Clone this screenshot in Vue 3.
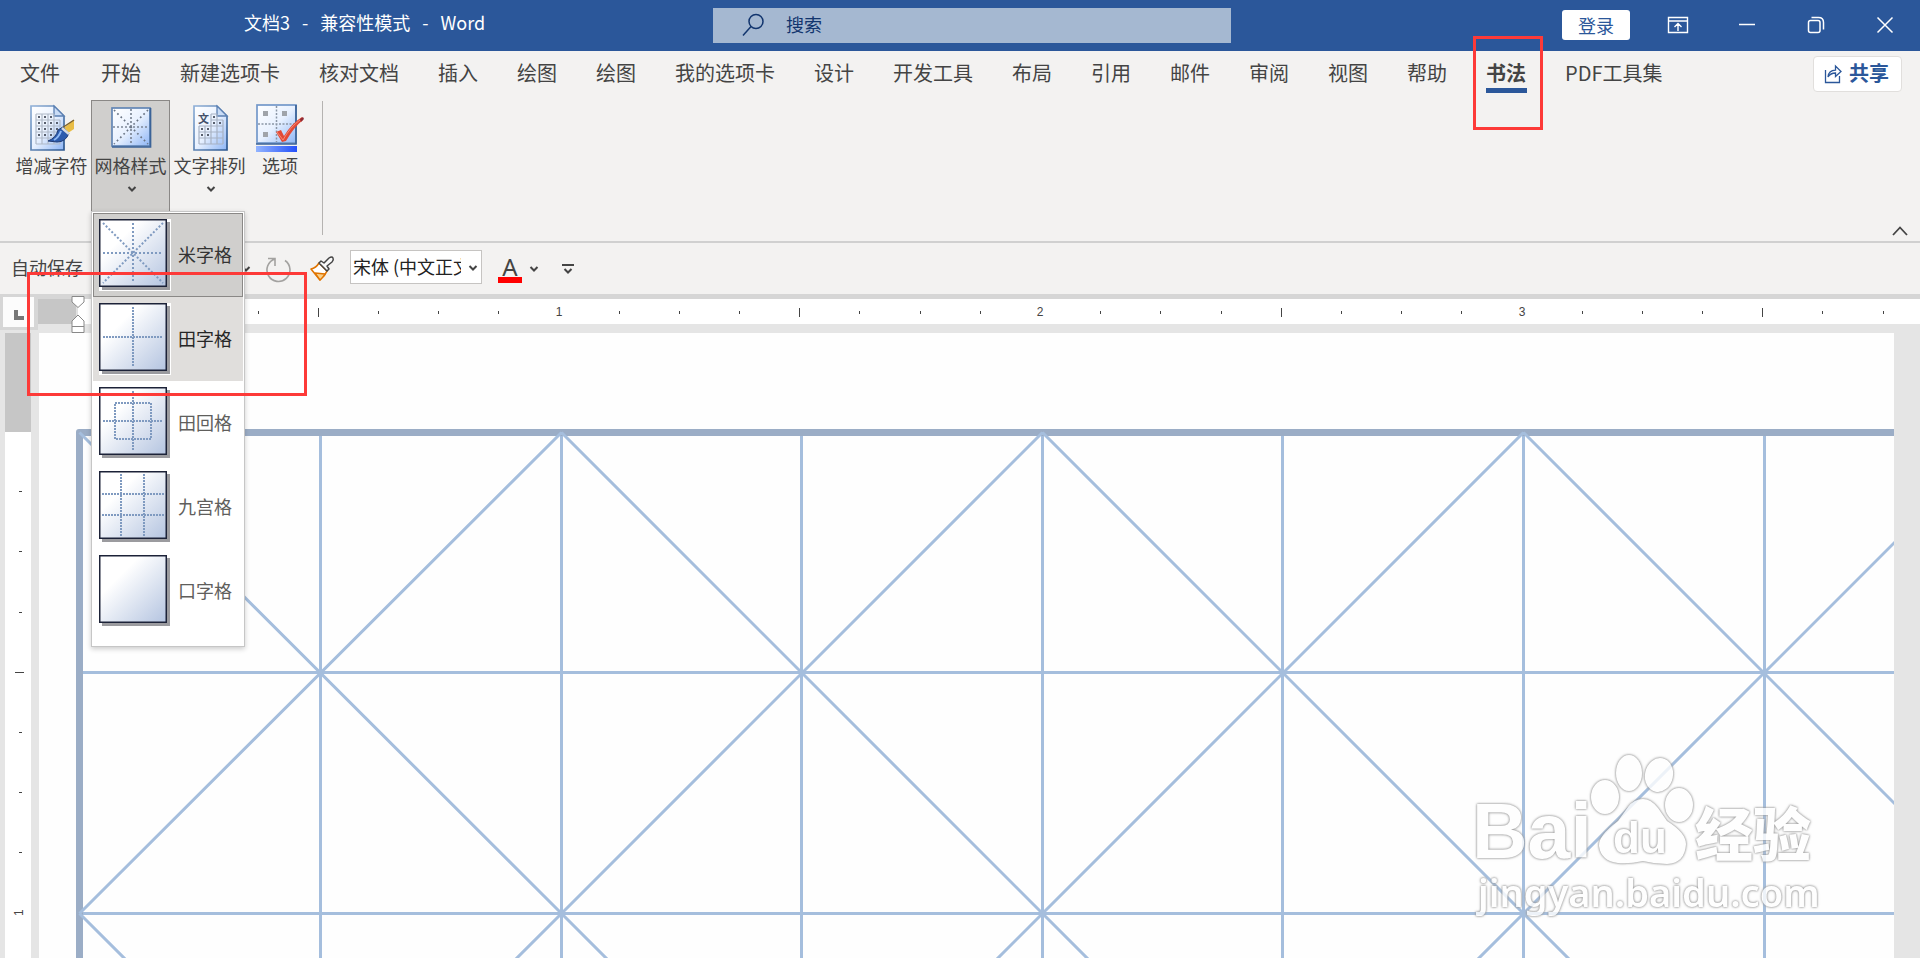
<script setup>
import { computed, onBeforeUnmount, onMounted, ref } from 'vue'

const tabs = ['文件', '开始', '新建选项卡', '核对文档', '插入', '绘图', '绘图', '我的选项卡', '设计', '开发工具', '布局', '引用', '邮件', '审阅', '视图', '帮助', '书法', 'PDF工具集']
const activeTab = ref(16)

const styles = [
  { name: '米字格', lines: 'M34 4V64M4 34H64M4 4L64 64M64 4L4 64' },
  { name: '田字格', lines: 'M34 4V64M4 34H64' },
  { name: '田回格', lines: 'M34 4V64M4 34H64M16 16H52V52H16Z' },
  { name: '九宫格', lines: 'M22 3V65M45 3V65M3 23H65M3 44H65' },
  { name: '口字格', lines: '' }
]
const selectedStyle = ref(0)
const hoveredStyle = ref(1)

const INCH = 481.5
const winW = ref(window.innerWidth)
const winH = ref(window.innerHeight)
function onResize() {
  winW.value = window.innerWidth
  winH.value = window.innerHeight
}
onMounted(() => window.addEventListener('resize', onResize))
onBeforeUnmount(() => window.removeEventListener('resize', onResize))

function buildTicks(origin, length) {
  const count = Math.floor(((length - origin - 10) * 8) / INCH)
  return Array.from({ length: Math.max(count, 0) }, (_, i) => {
    const n = i + 1
    return {
      pos: Math.round(origin + (n * INCH) / 8),
      label: n % 8 === 0 ? n / 8 : null,
      major: n % 8 === 4
    }
  })
}
const ticksX = computed(() => buildTicks(39, winW.value - 38))
const ticksY = computed(() => buildTicks(98, winH.value - 333))

const HALF = 240.6
const COLS = 16
const ROWS = 10
const verticals = Array.from({ length: COLS }, (_, i) => Math.floor(2.8 + i * HALF))
const horizontals = Array.from({ length: ROWS }, (_, i) => Math.floor(2 + i * HALF))
const diagonals = []
for (let r = 0; r + 2 < ROWS; r += 2) {
  for (let c = 0; c + 2 < COLS; c += 2) {
    const x1 = verticals[c] + 1.5
    const x2 = verticals[c + 2] + 1.5
    const y1 = horizontals[r] + 1.5
    const y2 = horizontals[r + 2] + 1.5
    diagonals.push(`M${x1} ${y1}L${x2} ${y2}M${x2} ${y1}L${x1} ${y2}`)
  }
}
</script>

<template>
  <div class="app">
    <header class="title-bar">
      <h1 class="title"><span>文档3</span><span>-</span><span>兼容性模式</span><span>-</span><span>Word</span></h1>
      <label class="search">
        <svg width="24" height="24" viewBox="0 0 24 24" fill="none" stroke="#12356e" stroke-width="1.5"><circle cx="15" cy="8.500" r="7" /><path d="M10 13.500L2 22.500" /></svg>
        <input type="text" placeholder="搜索" aria-label="搜索" />
      </label>
      <div class="window-tools">
        <button class="login">登录</button>
        <button class="win" aria-label="功能区显示选项">
          <svg width="22" height="18" viewBox="0 0 22 18" fill="none" stroke="#fff" stroke-width="1.4"><path d="M1.500 1.500H20.500V16.500H1.500ZM1.500 5H20.500M11 15V8M7.500 11L11 7.600L14.500 11" /></svg>
        </button>
        <button class="win" aria-label="最小化">
          <svg width="18" height="18" viewBox="0 0 18 18" stroke="#fff" stroke-width="1.5"><path d="M1 8.500H17" /></svg>
        </button>
        <button class="win" aria-label="还原">
          <svg width="18" height="18" viewBox="0 0 18 18" fill="none" stroke="#fff" stroke-width="1.5"><rect x="1.500" y="4.500" width="11.500" height="12" rx="2" /><path d="M4.500 1.500H11.500Q16.500 1.500 16.500 6.500V13.500" /></svg>
        </button>
        <button class="win" aria-label="关闭">
          <svg width="18" height="18" viewBox="0 0 18 18" stroke="#fff" stroke-width="1.5"><path d="M1.500 1.500L16.500 16.500M16.500 1.500L1.500 16.500" /></svg>
        </button>
      </div>
    </header>

    <nav class="tabs">
      <button v-for="(t, i) in tabs" :key="i" class="tab" :class="{ active: i === activeTab }" @click="activeTab = i">
        <span>{{ t }}</span>
        <i v-if="i === 16" class="callout callout-tab"></i>
      </button>
      <button class="share">
        <svg width="18" height="20" viewBox="0 0 18 20" fill="none" stroke="#2b579a" stroke-width="1.3"><path d="M1.500 6V18.500H15.500V12M4 13Q4.500 6.500 11.500 6.200V2L17 7.500L11.500 12.500V9Q6.500 9 4 13Z" /></svg>
        <span>共享</span>
      </button>
    </nav>

    <section class="ribbon">
      <div class="group">
        <button class="tool">
          <svg width="48" height="48" viewBox="0 0 48 48">
            <defs>
              <linearGradient id="paper" x1="0" y1="0" x2="1" y2="1"><stop offset="0" stop-color="#fff" /><stop offset=".5" stop-color="#e8f1ff" /><stop offset="1" stop-color="#8db5f5" /></linearGradient>
              <linearGradient id="edge" x1="0" y1="0" x2="1" y2="1"><stop offset="0" stop-color="#8fb0d8" /><stop offset="1" stop-color="#2c578f" /></linearGradient>
            </defs>
            <path d="M3 2H26L36 12V46H3Z" fill="url(#paper)" stroke="url(#edge)" stroke-width="1.700" />
            <path d="M26 2V12H36Z" fill="#c9dcf6" stroke="#5c80b2" stroke-width="1.300" />
            <path d="M8 10H26M8 16H32M8 22H32M8 28H32M8 34H32M8 40H32M8 10V40M14 10V40M20 10V40M26 10V40M32 16V40" stroke="#b0b9c8" stroke-width="1.200" />
            <path d="M10 13H26M10 19H32M10 25H32M10 31H24" stroke="#59606e" stroke-width="2" stroke-dasharray="2 4" />
            <path d="M36 24L46 16V25L40 29Z" fill="#e9bd45" /><path d="M34 24L46 16" stroke="#7d6128" stroke-width="1.500" />
            <path d="M20 37Q28 34 30 26L35 23L41 29Q38 38 29 38Z" fill="#2c5bad" stroke="#203c76" /><path d="M26 36Q31 33 33 27" stroke="#8eb8f5" stroke-width="2" fill="none" />
            <path d="M34 24L41 30" stroke="#d8dbe0" stroke-width="2.500" />
          </svg>
          <span>增减字符</span>
        </button>
        <div class="menu-anchor">
          <button class="tool pressed" aria-haspopup="true">
            <svg width="48" height="48" viewBox="0 0 48 48">
              <rect x="5" y="4" width="38" height="38" fill="url(#paper)" stroke="#6386b5" stroke-width="1.700" />
              <path d="M43.500 4V43H5" fill="none" stroke="#3b6398" stroke-width="1.700" />
              <path d="M24 5V41M6 23H42" stroke="#7c8696" stroke-width="1.700" stroke-dasharray="2 2" fill="none" />
              <path d="M7 6L41 40M41 6L7 40" stroke="#6b7686" stroke-width="1.700" stroke-dasharray="1.700 3" fill="none" />
            </svg>
            <span>网格样式</span>
            <svg class="chev" width="10" height="8" viewBox="0 0 10 8"><path d="M1.500 2L5 5.500L8.500 2" /></svg>
          </button>
          <ul class="menu">
            <li v-for="(s, i) in styles" :key="s.name">
              <button class="item" :class="{ selected: i === selectedStyle, hover: i === hoveredStyle }" @click="selectedStyle = i">
                <svg width="72" height="72" viewBox="0 0 72 72">
                  <defs><linearGradient id="tile" x1="0" y1="0" x2="1" y2="1"><stop offset=".3" stop-color="#fff" /><stop offset="1" stop-color="#b4c4e0" /></linearGradient></defs>
                  <path fill="#fff" d="M0 0H72V72H0Z" />
                  <rect x="3" y="3" width="68" height="68" fill="#9b9b9f" />
                  <rect x=".75" y=".75" width="66.500" height="66.500" fill="url(#tile)" stroke="#1c2238" stroke-width="1.500" />
                  <path :d="s.lines" fill="none" stroke="#7f9ac0" stroke-width="2" :stroke-dasharray="i === 0 ? '2 2' : '2 1'" />
                </svg>
                <span>{{ s.name }}</span>
              </button>
            </li>
          </ul>
        </div>
        <button class="tool" aria-haspopup="true">
          <svg width="48" height="48" viewBox="0 0 48 48">
            <path d="M8 2H31L41 12V46H8Z" fill="url(#paper)" stroke="url(#edge)" stroke-width="1.700" />
            <path d="M31 2V12H41Z" fill="#c9dcf6" stroke="#5c80b2" stroke-width="1.300" />
            <path d="M25 10H31M25 16H37M13 22H37M13 28H37M13 34H37M13 40H37M13 22V40M19 22V40M25 10V40M31 10V40M37 16V40" stroke="#a7b2c4" stroke-width="1.200" />
            <path d="M27 13H31M27 19H36M15 25H24M15 31H24" stroke="#59606e" stroke-width="2" stroke-dasharray="2 4" />
            <text x="12" y="19" font-size="11" font-weight="700" fill="#44516a">文</text>
          </svg>
          <span>文字排列</span>
          <svg class="chev" width="10" height="8" viewBox="0 0 10 8"><path d="M1.500 2L5 5.500L8.500 2" /></svg>
        </button>
        <button class="tool narrow">
          <svg width="48" height="48" viewBox="0 0 48 48">
            <defs><linearGradient id="bar"><stop offset="0" stop-color="#92b4ff" /><stop offset="1" stop-color="#2450fa" /></linearGradient></defs>
            <rect x="1" y="1" width="39" height="38" fill="url(#paper)" stroke="#7398ca" stroke-width="1.700" /><path d="M40 1V40H0" fill="none" stroke="#3b6398" stroke-width="1.700" />
            <path d="M20.500 2V38M2 20H39" stroke="#8a96a6" stroke-width="1.500" stroke-dasharray="2 1.500" />
            <path d="M7 7H12V12H7ZM26 7H31V12H26ZM7 28H12V33H7Z" fill="#a0a4aa" />
            <rect y="42" width="41" height="6" fill="url(#bar)" />
            <path d="M20 28L25 26L28 32Q36 19 46 13L47 16Q38 23 30 37L26 38Z" fill="#e34a35" /><path d="M21 28L27 36Q34 23 44 16" fill="none" stroke="#f58b76" /><path d="M44 15L47 13L48 15L45 18Z" fill="#8f2b34" />
          </svg>
          <span>选项</span>
        </button>
      </div>
      <button class="collapse" aria-label="折叠功能区"><svg width="18" height="12" viewBox="0 0 18 12" fill="none" stroke="#444" stroke-width="1.800"><path d="M2 10L9 2.500L16 10" /></svg></button>
    </section>

    <section class="quick">
      <span class="autosave">自动保存</span>
      <button class="icon-btn undo-more" aria-label="撤消选项"><svg class="chev" width="10" height="8" viewBox="0 0 10 8"><path d="M1.500 2L5 5.500L8.500 2" /></svg></button>
      <button class="icon-btn redo" aria-label="重复"><svg width="26" height="28" viewBox="0 0 26 28" fill="none" stroke="#a3a2a0" stroke-width="1.600"><path d="M2 3.500H9V11M9 4A11.500 11.500 0 1 0 19 5.500" /></svg></button>
      <button class="icon-btn brush" aria-label="格式刷">
        <svg width="26" height="26" viewBox="0 0 26 26" stroke-linejoin="round">
          <path d="M2 13Q7 12 10 7L18 15Q16 20 11 24Z" fill="#fff" stroke="#e07400" stroke-width="1.600" /><path d="M6 17L16 18Q14 21 11 24Z" fill="#f9d18c" stroke="#e07400" stroke-width="1.300" />
          <path d="M10 7L12 5L15 7L20 2Q23 0 24 2Q25 4 23 6L18 10L20 13L18 15Z" fill="#f9f9f9" stroke="#444" stroke-width="1.500" />
        </svg>
      </button>
      <div class="font-box">
        <select aria-label="字体"><option>宋体 (中文正文)</option></select>
        <svg class="chev" width="10" height="8" viewBox="0 0 10 8"><path d="M1.500 2L5 5.500L8.500 2" /></svg>
      </div>
      <button class="icon-btn color" aria-label="字体颜色"><span>A</span><i></i></button>
      <button class="icon-btn color-more" aria-label="更多颜色"><svg class="chev" width="10" height="8" viewBox="0 0 10 8"><path d="M1.500 2L5 5.500L8.500 2" /></svg></button>
      <button class="icon-btn" aria-label="自定义快速访问工具栏"><svg width="12" height="12" viewBox="0 0 12 12" fill="none" stroke="#444" stroke-width="2"><path d="M0 2H12M2.500 6L6 9.500L9.500 6" /></svg></button>
    </section>

    <section class="ruler-row">
      <button class="corner" aria-label="制表符"><svg width="10" height="10" viewBox="0 0 10 10"><path d="M0 0H4V6H10V10H0Z" fill="#777" /></svg></button>
      <svg class="ruler-x" width="100%" height="25">
        <rect width="38" height="25" fill="#c6c6c6" />
        <rect x="38" width="2" height="25" fill="#e1e1e1" />
        <g v-for="t in ticksX" :key="t.pos">
          <text v-if="t.label" :x="t.pos" y="17" text-anchor="middle">{{ t.label }}</text>
          <rect v-else :x="t.pos" :y="t.major ? 9 : 12" width="1" :height="t.major ? 9 : 3" />
        </g>
      </svg>
      <svg class="indent" width="14" height="38" viewBox="0 0 14 38" fill="#fff" stroke="#888" stroke-width="1"><path d="M1 .5H13V6L7 11.500L1 6ZM7 19L13 25V36.500H1V25ZM1 30.500H13" /></svg>
    </section>

    <main class="workspace">
      <svg class="ruler-y" width="26" height="100%">
        <rect width="26" height="99" fill="#c6c6c6" />
        <g v-for="t in ticksY" :key="t.pos">
          <text v-if="t.label" :transform="`translate(18 ${t.pos + 3}) rotate(-90)`">{{ t.label }}</text>
          <rect v-else :x="t.major ? 10 : 14" :y="t.pos" :width="t.major ? 9 : 3" height="1" />
        </g>
      </svg>
      <div class="page">
        <svg class="grid" width="100%" height="100%">
          <path d="M0 7V3Q0 0 3 0H4000V7H7V4000H0Z" fill="#9badc6" />
          <g fill="#a5bedd" shape-rendering="crispEdges">
            <rect v-for="x in verticals.slice(1)" :key="'v' + x" :x="x" y="7" width="3" height="4000" />
            <rect v-for="y in horizontals.slice(1)" :key="'h' + y" x="7" :y="y" width="4000" height="3" />
          </g>
          <path :d="diagonals.join('')" fill="none" stroke="#a5bedd" stroke-width="3" />
        </svg>
        <svg class="watermark" width="350" height="174" viewBox="0 0 350 174">
          <g class="mark">
            <text class="bai" x="-2" y="106">Bai</text>
            <g class="paw">
              <ellipse cx="131" cy="45" rx="14" ry="17" /><ellipse cx="155" cy="21" rx="13" ry="18" /><ellipse cx="185" cy="23" rx="14" ry="17" transform="rotate(12 185 23)" /><ellipse cx="205" cy="53" rx="14" ry="17" />
              <path d="M169 47Q177 47 184 56L193 69Q212 81 212 92Q211 111 193 112Q181 112 169 109Q155 112 144 111Q127 109 125 94Q124 84 144 69L154 55Q160 47 169 47Z" />
            </g>
            <text class="du" x="139" y="101">du</text>
            <text class="exp" x="221" y="104">经验</text>
            <text class="url" x="4" y="155">jingyan.baidu.com</text>
          </g>
        </svg>
      </div>
    </main>
    <i class="callout callout-menu"></i>
  </div>
</template>

<style>
body { background: #e5e5e5; overflow: hidden; }
</style>

<style scoped>
.app { position: relative; display: flex; flex-direction: column; height: 100vh; color: #444; background: #e5e5e5; font-family: "Noto Sans CJK SC", "Noto Sans", sans-serif; font-size: 18px; overflow: hidden; }
button, input, select { font: inherit; color: inherit; }
button { border: 0; padding: 0; background: none; }
svg { display: block; flex: none; }
.chev { fill: none; stroke: #444; stroke-width: 2; }

.title-bar { display: grid; grid-template-columns: 713fr 518fr 689fr; align-items: center; flex: none; height: 51px; background: #2b579a; color: #fff; }
.title { display: flex; gap: 12px; margin: 0 0 7px 244px; font-size: 18px; line-height: 24px; font-weight: 400; white-space: nowrap; }
.search { display: flex; align-items: center; gap: 21px; height: 35px; padding-left: 28px; background: #a5b8d1; color: #12356e; }
.search svg { margin-bottom: 2px; }
.search input { flex: 1; min-width: 0; padding: 0 0 3px; border: 0; outline: 0; background: none; }
.search input::placeholder { color: #12356e; opacity: 1; }
.window-tools { display: flex; justify-content: flex-end; align-items: center; padding: 0 1px 2px 0; }
.login { width: 68px; height: 30px; margin-right: 13px; border-radius: 3px; background: #fff; color: #2b579a; line-height: 28px; }
.win { display: grid; place-items: center; width: 69px; height: 48px; }

.tabs { display: flex; align-items: center; flex: none; height: 49px; padding: 0 18px 0 0; background: #f3f2f1; font-size: 20px; white-space: nowrap; }
.tab { position: relative; height: 46px; padding: 0 19px 5px 20px; line-height: 36px; }
.tab:first-child { padding-right: 21px; }
.tab.active { font-weight: 700; }
.tab.active::after { content: ""; position: absolute; left: 20px; right: 18px; bottom: 6px; height: 5px; background: #2b579a; }
.callout { position: absolute; box-sizing: border-box; border: 3px solid #fd3a38; pointer-events: none; }
.callout-tab { z-index: 3; left: 7px; top: -17px; width: 70px; height: 94px; }
.callout-menu { z-index: 9; left: 27px; top: 272px; width: 280px; height: 124px; }
.share { display: flex; align-items: center; gap: 7px; box-sizing: border-box; height: 36px; margin: 0 0 3px auto; padding: 0 12px 0 10px; border: 1px solid #e1dfdd; border-radius: 4px; background: #fff; color: #2b579a; font-weight: 700; }
.share span { padding-bottom: 3px; }

.ribbon { display: flex; justify-content: space-between; align-items: flex-start; flex: none; height: 141px; border-bottom: 2px solid #d0d0d0; background: #f3f2f1; }
.group { display: flex; height: 135px; padding: 0 12px; position: relative; }
.group::after { content: ""; position: absolute; right: 0; top: 1px; bottom: 0; width: 1px; background: #b5b3b1; }
.tool { display: flex; flex-direction: column; align-items: center; box-sizing: border-box; width: 79px; height: 112px; padding-top: 3px; border: 1px solid transparent; line-height: 26px; white-space: nowrap; }
.tool .chev { margin: 7px 0 0 3px; }
.tool.narrow { width: 62px; }
.tool.pressed { background: #d0cfcd; border-color: #8a8886; }
.menu-anchor { position: relative; }
.menu { position: absolute; z-index: 5; left: 0; top: 111px; box-sizing: border-box; width: 154px; margin: 0; padding: 1px 1px 13px; list-style: none; background: #fff; border: 1px solid #c6c6c6; box-shadow: 0 2px 5px rgba(0, 0, 0, .2); }
.item { display: flex; align-items: center; gap: 7px; box-sizing: border-box; width: 100%; height: 84px; padding: 0 5px; border: 1px solid transparent; color: #605e5c; white-space: nowrap; }
.item span { padding-bottom: 2px; }
.item.selected { background: #d0cfcd; border-color: #8a8886; color: #333; }
.item.hover { background: #e0dedc; color: #262626; }
.collapse { align-self: flex-end; margin: 0 11px 4px 0; }

.quick { display: flex; align-items: center; flex: none; height: 51px; padding-left: 11px; background: #f3f2f1; }
.autosave { width: 230px; padding-bottom: 3px; line-height: 26px; }
.undo-more { width: 12px; }
.redo { margin-left: 13px; }
.brush { margin-left: 17px; }
.font-box { position: relative; width: 132px; height: 34px; margin: 0 0 4px 15px; }
.font-box select { appearance: none; width: 100%; height: 100%; padding: 0 20px 2px 2px; border: 1px solid #c6c4c2; border-radius: 0; background: #fff; color: #222; line-height: 30px; }
.font-box .chev { position: absolute; right: 4px; top: 14px; pointer-events: none; }
.color { margin-left: 16px; width: 24px; }
.color span { display: block; height: 23px; font: 24px/25px "Noto Sans", sans-serif; }
.color i { display: block; height: 6px; background: #f00; }
.color-more { margin: 0 23px 0 7px; }

.ruler-row { position: relative; flex: none; height: 25px; padding-left: 38px; border-top: 5px solid #d6d6d6; background: #fff; }
.corner { position: absolute; z-index: 1; left: 0; top: -5px; display: grid; place-items: center; box-sizing: border-box; width: 38px; height: 36px; border: 3px solid #d6d6d6; border-right-width: 4px; background: #fcfcfc; }
.corner svg { margin-top: 6px; }
.ruler-x text, .ruler-y text { font: 12px "Liberation Sans", sans-serif; fill: #444; }
.ruler-x > g, .ruler-y > g { fill: #444; }
.indent { position: absolute; z-index: 1; left: 71px; top: -3px; }

.workspace { display: flex; flex: 1; min-height: 0; gap: 8px; padding: 9px 26px 0 5px; }
.ruler-y { background: #fff; }
.page { position: relative; flex: 1; min-width: 0; box-sizing: border-box; padding: 96px 0 0 37px; background: #fefefe; overflow: hidden; }
.watermark { position: absolute; right: 70px; bottom: 32px; overflow: visible; }
.mark { fill: #fff; opacity: .8; }
.mark > * { filter: drop-shadow(0 0 1px #777) drop-shadow(0 0 1px #bbb); }
.bai { font: 700 77px "Liberation Sans", sans-serif; }
.du { font: 700 44px "Liberation Sans", sans-serif; }
.exp { font: 900 58px "Noto Sans CJK SC", sans-serif; }
.url { font: 600 38px "Noto Sans", sans-serif; }
</style>
